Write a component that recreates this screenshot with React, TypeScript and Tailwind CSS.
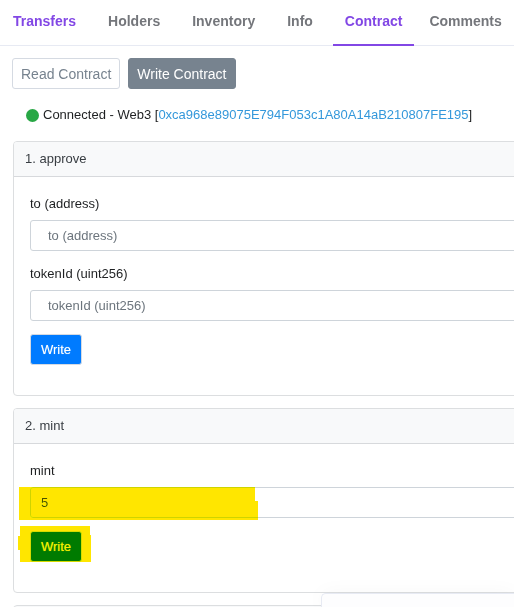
import type { ReactNode } from "react";

const tabs = ["Transfers", "Holders", "Inventory", "Info", "Contract"];
const tabBase = "block h-[46px] px-3 pt-[11px] text-sm leading-5 font-bold";

function Field({ id, label, placeholder, value, children }: {
  id: string;
  label: string;
  placeholder?: string;
  value?: string;
  children?: ReactNode;
}) {
  return (
    <div className="mb-3">
      <label htmlFor={id} className="mb-[6px] block pt-px leading-5">{label}</label>
      <div className="relative">
        <input
          id={id}
          type="text"
          placeholder={placeholder}
          defaultValue={value}
          className="block h-[31px] w-full rounded-[3px] border border-[#ced4da] bg-white px-[10px] text-[#495057] placeholder:text-[#6c757d] placeholder-shown:px-[17px]"
        />
        {children}
      </div>
    </div>
  );
}

function Card({ title, children }: { title: string; children: ReactNode }) {
  return (
    <section className="mb-3 rounded-[4px] border border-[#dcdee0] bg-white">
      <h2 className="rounded-t-[3px] border-b border-[#d7d9dc] bg-[#f8f9fa] px-[11px] py-[7px] leading-5 text-[#383d42]">{title}</h2>
      <div className="px-4 pt-4 pb-[30px]">{children}</div>
    </section>
  );
}

function WriteButton({ children }: { children?: ReactNode }) {
  return (
    <div className="relative mt-[13px] w-fit">
      <button type="button" className="block h-[31px] rounded-[3px] border border-[#d5dae2] bg-[#007bff] px-[10px] text-white [text-shadow:0_0_1px_#ffffff80]">
        Write
      </button>
      {children}
    </div>
  );
}

export default function App() {
  return (
    <div className="relative h-screen overflow-hidden bg-white font-['Liberation_Sans',Arial,sans-serif] text-[13px] text-[#1e2022]">
      <nav className="flex w-max min-w-full border-b border-[#e7eaf3] pl-px">
        <div className="-mb-px flex gap-2">
          {tabs.map((tab) => (
            <a
              key={tab}
              href="#"
              className={`${tabBase} ${
                tab === "Contract"
                  ? "border-b-2 border-[#8247e5] text-[#8247e5]"
                  : tab === "Transfers"
                    ? "text-[#8247e5]"
                    : "text-[#74767b]"
              }`}
            >
              {tab}
            </a>
          ))}
        </div>
        <a href="#" className={`${tabBase} ml-[3px] -mb-px text-[#74767b]`}>Comments</a>
      </nav>

      <main className="-mr-6 pt-3 pl-3">
        <div className="flex gap-2 text-sm">
          <button type="button" className="h-[31px] rounded-[3px] border border-[#d5dae2] bg-white px-2 text-[#77838f]">Read Contract</button>
          <button type="button" className="h-[31px] rounded-[3px] border border-[#77838f] bg-[#77838f] px-2 text-white">Write Contract</button>
        </div>

        <p className="my-4 flex items-center pl-[14px] leading-5">
          <span className="mr-1 size-[13px] rounded-full bg-[#28a745]" />
          <span>Connected - Web3 [<a href="#" className="text-[#3498db]">0xca968e89075E794F053c1A80A14aB210807FE195</a>]</span>
        </p>

        <div className="pl-px">
          <Card title="1. approve">
            <Field id="approve-to" label="to (address)" placeholder="to (address)" />
            <Field id="approve-token" label="tokenId (uint256)" placeholder="tokenId (uint256)" />
            <WriteButton />
          </Card>
          <Card title="2. mint">
            <Field id="mint-amount" label="mint" value="5">
              <svg className="pointer-events-none absolute top-0 -left-[11px] mix-blend-darken" width="239" height="33" aria-hidden="true">
                <path d="M0 0H236V14H239V33H0Z" fill="#ffe600" />
              </svg>
            </Field>
            <WriteButton>
              <svg className="pointer-events-none absolute -top-[5px] -left-3 mix-blend-darken" width="73" height="36" aria-hidden="true">
                <path d="M2 0H72V9H73V36H2V24H0V10H2Z" fill="#ffe600" />
              </svg>
            </WriteButton>
          </Card>
          <div className="h-9 rounded-t-[4px] border border-[#dcdee0] bg-[#f8f9fa]" />
        </div>
      </main>

      <div className="absolute right-0 bottom-0 h-[14px] w-[193px] rounded-tl-[5px] border-t border-l border-[#e7eaf3] bg-[#fdfdfe] shadow-[0_0_20px_#0000000a]" />
    </div>
  );
}
